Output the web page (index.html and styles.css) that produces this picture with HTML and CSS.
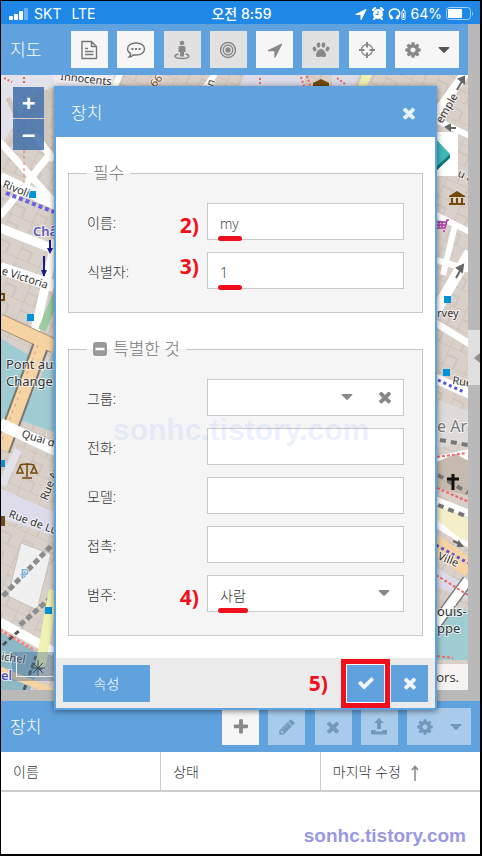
FILE: index.html
```html
<!DOCTYPE html>
<html lang="ko">

<head>
    <meta charset="UTF-8">
    <meta name="viewport" content="width=device-width, initial-scale=1.0">
    <title>장치</title>
    <link rel="stylesheet" href="styles.css">
</head>

<body>
    <!-- 공용 아이콘 -->
    <svg class="symbols" aria-hidden="true">
        <symbol id="i-times" viewBox="0 0 1792 1792">
            <path d="M1490 1322q0 40-28 68l-136 136q-28 28-68 28t-68-28l-294-294-294 294q-28 28-68 28t-68-28l-136-136q-28-28-28-68t28-68l294-294-294-294q-28-28-28-68t28-68l136-136q28-28 68-28t68 28l294 294 294-294q28-28 68-28t68 28l136 136q28 28 28 68t-28 68l-294 294 294 294q28 28 28 68z" />
        </symbol>
        <symbol id="i-check" viewBox="0 0 1792 1792">
            <path d="M1671 566q0 40-28 68l-724 724-136 136q-28 28-68 28t-68-28l-136-136-362-362q-28-28-28-68t28-68l136-136q28-28 68-28t68 28l294 295 656-657q28-28 68-28t68 28l136 136q28 28 28 68z" />
        </symbol>
        <symbol id="i-plus" viewBox="0 0 1792 1792">
            <path d="M1600 736v192q0 40-28 68t-68 28h-416v416q0 40-28 68t-68 28h-192q-40 0-68-28t-28-68v-416h-416q-40 0-68-28t-28-68v-192q0-40 28-68t68-28h416v-416q0-40 28-68t68-28h192q40 0 68 28t28 68v416h416q40 0 68 28t28 68z" />
        </symbol>
        <symbol id="i-cog" viewBox="0 0 1792 1792">
            <path d="M1152 896q0-106-75-181t-181-75-181 75-75 181 75 181 181 75 181-75 75-181zm512-109v222q0 12-8 23t-20 13l-185 28q-19 54-39 91 35 50 107 138 10 12 10 25t-9 23q-27 37-99 108t-94 71q-12 0-26-9l-138-108q-44 23-91 38-16 136-29 186-7 28-36 28h-222q-14 0-24.500-8.500t-11.500-21.500l-28-184q-49-16-90-37l-141 107q-10 9-25 9-14 0-25-11-126-114-165-168-7-10-7-23 0-12 8-23 15-21 51-66.500t54-70.500q-27-50-41-99l-183-27q-13-2-21-12.500t-8-23.500v-222q0-12 8-23t19-13l186-28q14-46 39-92-40-57-107-138-10-12-10-24 0-10 9-23 26-36 98.500-107.500t94.500-71.500q13 0 26 10l138 107q44-23 91-38 16-136 29-186 7-28 36-28h222q14 0 24.500 8.500t11.500 21.500l28 184q49 16 90 37l142-107q9-9 24-9 13 0 25 10 129 119 165 170 7 8 7 22 0 12-8 23-15 21-51 66.500t-54 70.500q26 50 41 98l183 28q13 2 21 12.500t8 23.500z" />
        </symbol>
        <symbol id="i-arrow" viewBox="0 0 1792 1792">
            <path d="M1593 349l-640 1280q-17 35-57 35-5 0-15-2-22-5-35.500-22.500t-13.500-39.500v-576h-576q-22 0-39.500-13.500t-22.500-35.500 4-42 29-30l1280-640q13-7 29-7 27 0 45 19 15 14 18.500 34.500t-6.500 39.500z" />
        </symbol>
        <symbol id="i-pencil" viewBox="0 0 1792 1792">
            <path d="M491 1536l91-91-235-235-91 91v107h128v128h107zm523-928q0-22-22-22-10 0-17 7l-542 542q-7 7-7 17 0 22 22 22 10 0 17-7l542-542q7-7 7-17zm-54-192l416 416-832 832h-416v-416zm683 96q0 53-37 90l-166 166-416-416 166-165q36-38 90-38 53 0 91 38l235 234q37 39 37 91z" />
        </symbol>
        <symbol id="i-caret" viewBox="0 0 12 12">
            <path d="M1 3h10q.6.200.3 1L6.500 8.800q-.5.400-1 0L.7 4Q.4 3.200 1 3z" />
        </symbol>
    </svg>

    <div class="app">
        <header class="status">
            <div class="status-left">
                <svg width="20" height="14" viewBox="0 0 20 14" fill="#fff">
                    <rect x="0" y="9" width="4" height="4" rx="1" />
                    <rect x="5" y="7" width="4" height="6" rx="1" />
                    <rect x="10" y="4" width="4" height="9" rx="1" />
                    <rect x="15" y="1" width="4" height="12" rx="1" opacity=".35" />
                </svg>
                <span>SKT</span>
                <span class="lte">LTE</span>
            </div>
            <div class="status-time">오전 8:59</div>
            <div class="status-right">
                <svg width="14" height="14" fill="#fff"><use href="#i-arrow" /></svg>
                <svg width="12" height="13" viewBox="0 0 12 13">
                    <circle cx="6" cy="7" r="5" fill="#fff" />
                    <path d="M1 3l2-2M11 3L9 1M2 12l1-1M10 12l-1-1" stroke="#fff" stroke-width="2" stroke-linecap="round" />
                    <path d="M6 4v3.500H3.500" fill="none" stroke="#1f87e6" />
                </svg>
                <svg width="19" height="14" viewBox="0 0 19 14" fill="none" stroke="#fff">
                    <path d="M3.500 12C-.5 7 1.500 2 6.500 2s7 5 3 10" stroke-width="1.500" />
                    <path d="M2.500 8.500l2 3.500M10.500 8.500l-2 3.500" stroke-width="2.500" />
                    <rect x="14" y="3.500" width="3" height="9" rx="1" />
                    <path d="M15.500 1.500v2M15.500 6v5" />
                </svg>
                <span>64%</span>
                <svg width="28" height="13" viewBox="0 0 28 13">
                    <rect x=".5" y=".5" width="24" height="12" rx="3" fill="none" stroke="#fff" opacity=".6" />
                    <rect x="2" y="2" width="14" height="9" rx="1" fill="#fff" />
                    <path d="M26 4v5q1.500-2.500 0-5z" fill="#fff" opacity=".7" />
                </svg>
            </div>
        </header>

        <div class="main">
            <section class="map-panel">
                <div class="toolbar">
                    <h2 class="title">지도</h2>
                    <div class="tools">
                        <button class="tool" type="button" aria-label="보고서">
                            <svg width="19" height="20" viewBox="0 0 19 20" fill="none" stroke="#777" stroke-width="1.400">
                                <path d="M2 1.500h9.500l5 5v12H2zM11.500 1.500v5h5M5 8.500h3M5 11.500h8.500M5 14.500h8.500" />
                            </svg>
                        </button>
                        <button class="tool" type="button" aria-label="이벤트">
                            <svg width="20" height="18" viewBox="0 0 20 18" fill="none" stroke="#777" stroke-width="1.400">
                                <path d="M10 2c5 0 8.500 2.500 8.500 6s-3.500 6-8.500 6q-1.200 0-2.500-.3Q5.500 16 3 16q1.700-1.500 1.700-3.400C2.700 11.500 1.500 10 1.500 8c0-3.500 3.500-6 8.500-6z" />
                                <path d="M5.500 8h2M9 8h2M12.500 8h2" stroke-width="2" />
                            </svg>
                        </button>
                        <button class="tool pressed" type="button" aria-label="지오펜스">
                            <svg width="16" height="20" viewBox="0 0 16 20" fill="#888">
                                <circle cx="8" cy="3" r="2.300" />
                                <path d="M6 6h4q1.500 0 1.500 1.500V12H10v4.500H6V12H4.500V7.500Q4.500 6 6 6z" />
                                <path d="M4.500 14C-1 15 0 18.500 8 18.500S17 15 11.500 14" fill="none" stroke="#888" stroke-width="1.400" />
                            </svg>
                        </button>
                        <button class="tool pressed" type="button" aria-label="실시간">
                            <svg width="18" height="18" viewBox="0 0 18 18" fill="none" stroke="#888" stroke-width="1.400">
                                <circle cx="9" cy="9" r="7.500" />
                                <circle cx="9" cy="9" r="4.800" />
                                <circle cx="9" cy="9" r="2" fill="#888" />
                            </svg>
                        </button>
                        <button class="tool" type="button" aria-label="위치">
                            <svg width="18" height="18"><use href="#i-arrow" /></svg>
                        </button>
                        <button class="tool pressed" type="button" aria-label="따라가기">
                            <svg width="18" height="18" viewBox="0 0 18 18">
                                <ellipse cx="6.500" cy="4" rx="1.900" ry="2.700" />
                                <ellipse cx="11.500" cy="4" rx="1.900" ry="2.700" />
                                <ellipse cx="2.500" cy="8" rx="1.800" ry="2.400" transform="rotate(-20 2.500 8)" />
                                <ellipse cx="15.500" cy="8" rx="1.800" ry="2.400" transform="rotate(20 15.500 8)" />
                                <path d="M9 8c2.500 0 5 3.500 5 6 0 2.200-2 2.300-3 1.900q-2-.8-4 0c-1 .4-3 .3-3-1.900 0-2.500 2.500-6 5-6z" />
                            </svg>
                        </button>
                        <button class="tool" type="button" aria-label="중심">
                            <svg width="18" height="18" viewBox="0 0 18 18" fill="none" stroke="#888">
                                <circle cx="9" cy="9" r="5.500" stroke-width="1.400" />
                                <path d="M9 1v5.500M9 11.500V17M1 9h5.500M11.500 9H17" stroke-width="2" />
                            </svg>
                        </button>
                        <button class="tool menu" type="button" aria-label="설정">
                            <svg width="18" height="18"><use href="#i-cog" /></svg>
                            <svg class="dark" width="12" height="12"><use href="#i-caret" /></svg>
                        </button>
                    </div>
                </div>

                <div class="map">
                    <svg class="map-canvas" viewBox="1 75 467 615" preserveAspectRatio="xMinYMin slice">
                        <defs>
                            <pattern id="blocks" width="24" height="19" patternUnits="userSpaceOnUse" patternTransform="rotate(24)">
                                <rect width="24" height="19" fill="#d9d0c9" />
                                <path d="M0 0h24M0 0v19M12 9v10M0 9h12" fill="none" stroke="#c6bab0" />
                            </pattern>
                        </defs>
                        <rect x="1" y="75" width="468" height="615" fill="url(#blocks)" />

                        <!-- 위쪽 -->
                        <path d="M1 75h53v12L36 92 1 145z" fill="#e3e1ea" />
                        <path d="M8 98l14 30-16 20M46 90v60" stroke="#cfc6be" stroke-width="5" fill="none" />
                        <path d="M114 88l6-14M205 88l10-14" stroke="#fff" stroke-width="6" />
                        <path d="M54 75h60l-2 12H54z" fill="#eceaf0" />
                        <path d="M245 75h60v12h-66zM332 75h28l-8 12h-20z" fill="#dcdbe8" />
                        <path d="M362 75h10l-6 12h-8z" fill="#eef0b0" />
                        <path d="M4 78l8 4M24 77v8M260 78v7M301 77l3 9M307 76l3 9M337 78l8 6" stroke="#f06060" stroke-width="2" stroke-dasharray="2 2" />
                        <path d="M313 83l8-4 8 4v3h-16z" fill="#734a08" />
                        <text x="60" y="80" transform="rotate(6 60 80)" class="street">Innocents</text>
                        <text x="155" y="88" transform="rotate(-50 155 88)" class="street brown">66</text>
                        <text x="212" y="90" transform="rotate(-70 212 90)" class="street">in</text>

                        <!-- 왼쪽 -->
                        <g fill="none" stroke="#fff">
                            <path d="M0 142l54 60M34 134l20 26M0 216l50-62" stroke-width="7" />
                            <path d="M0 178l56 26" stroke-width="12" />
                            <path d="M0 228l56 22M56 240L34 335" stroke-width="9" />
                            <path d="M0 268l54 18" stroke-width="12" />
                        </g>
                        <path d="M24 90v95" stroke="#f07070" stroke-dasharray="3 3" />
                        <path d="M6 193l48 19" stroke="#6a62e0" stroke-width="4" stroke-dasharray="4 3" />
                        <path d="M50 240v12M44 256v20" stroke="#1a1a90" stroke-width="2" />
                        <path d="M47 248h6l-3 6zM41 270h6l-3 7z" fill="#1a1a90" />
                        <path d="M0 338l40 24-20 60-20 16z" fill="#9fcbd3" />
                        <path d="M54 350v82l-34-12z" fill="#9fcbd3" />
                        <path d="M56 296l-14 34" stroke="#9ccba0" stroke-width="8" />
                        <path d="M0 321l54 25" stroke="#a58b6d" stroke-width="15" />
                        <path d="M41 345L2 450" stroke="#777" stroke-width="17" />
                        <path d="M41 345L2 450" stroke="#f6d3a2" stroke-width="13" />
                        <path d="M0 321l54 25" stroke="#f6d3a2" stroke-width="13" />
                        <path d="M38 345L2 440" stroke="#c9a27a" stroke-dasharray="3 4" />
                        <path d="M0 424l56 26" stroke="#fff" stroke-width="12" />
                        <path d="M18 450L2 485" stroke="#e3e1ea" stroke-width="8" />
                        <path d="M0 488l54 24v24L0 518z" fill="#dddbe9" />
                        <path d="M21 543l30 11-14 56-29-14z" fill="#f0f0f0" stroke="#c8c0ba" />
                        <path d="M3 596l50-52M20 625l34-30" stroke="#8c8c8c" stroke-width="5" stroke-dasharray="6 3" />
                        <path d="M0 622l54 30" stroke="#fff" stroke-width="9" />
                        <path d="M0 632l44 24-14 34H0z" fill="#8fb8c6" />
                        <path d="M0 630l34 20" stroke="#e88" stroke-width="3" stroke-dasharray="3 2" />
                        <path d="M3 645l18-16M24 690l12-34M40 670l6-14" stroke="#555" stroke-width="3" stroke-dasharray="5 3" />
                        <path d="M54 590L40 668" stroke="#f0f2b2" stroke-width="10" />
                        <path d="M0 670l54 22" stroke="#f6d3a2" stroke-width="7" />
                        <path d="M31 668h14M38 660v16M33 663l10 10M43 663l-10 10" stroke="#333" />
                        <g fill="#0092da">
                            <rect x="29" y="191" width="7" height="7" />
                            <rect x="27" y="314" width="7" height="7" />
                            <rect x="0" y="460" width="5" height="7" />
                            <rect x="45" y="607" width="7" height="7" />
                        </g>
                        <g fill="none" stroke="#734a08" stroke-width="1.500">
                            <path d="M27 463v14M22 478h10M20 465q7-2 14 0M20 466l-3 7h6zM34 466l-3 7h6z" />
                            <path d="M0 294h4v6H0" stroke-width="2" />
                        </g>
                        <path d="M0 516h5v10H0z" fill="#734a08" />
                        <text x="2" y="187" transform="rotate(22 2 187)" class="street">Rivoli</text>
                        <text x="33" y="236" class="station">Châ</text>
                        <text x="1" y="274" transform="rotate(18 1 274)" class="street">e Victoria</text>
                        <text x="6" y="369" class="place">Pont au</text>
                        <text x="6" y="386" class="place">Change</text>
                        <text x="21" y="437" transform="rotate(17 21 437)" class="street">Quai de</text>
                        <text x="47" y="501" transform="rotate(-68 47 501)" class="street">Rue Au</text>
                        <text x="8" y="517" transform="rotate(20 8 517)" class="street">Rue de Lu</text>
                        <text x="20" y="579" class="parking">P</text>
                        <text x="1" y="660" transform="rotate(8 1 660)" class="street">ichel</text>
                        <text x="1" y="680" class="station">el</text>

                        <!-- 오른쪽 -->
                        <g fill="none" stroke="#fff">
                            <path d="M430 122l36-50" stroke-width="9" />
                            <path d="M436 120l34 16" stroke-width="6" />
                            <path d="M434 214l36 18M455 225l-12 50M436 260l34 10" stroke-width="6" />
                            <path d="M434 314l36-62" stroke-width="11" />
                            <path d="M434 322l36 22" stroke-width="7" />
                            <path d="M434 378l36 16M434 462l36-8" stroke-width="10" />
                            <path d="M434 500l36 14M434 522l36 22" stroke-width="8" />
                        </g>
                        <path d="M438 400l32 12v30l-34 6z" fill="#dddbd9" />
                        <path d="M436 462l20-8 14 8v34l-34-8z" fill="#c6b9ad" />
                        <path d="M437 505l33 14v24l-12-6-22-18z" fill="#f3f0c9" />
                        <path d="M434 610h36v50h-36z" fill="#9fcbd3" />
                        <path d="M434 543l36 26" stroke="#f6d3a2" stroke-width="18" />
                        <path d="M434 566l36 22v12l-36-14z" fill="#dddbe9" />
                        <path d="M436 624l32-44" stroke="#777" stroke-width="12" />
                        <path d="M436 624l32-44" stroke="#fff" stroke-width="9" />
                        <path d="M437 457l30-4M437 488l32 14M436 575l32 20M437 656l16 2" stroke="#f06868" stroke-width="2" stroke-dasharray="3 2" />
                        <path d="M440 440l28 5M438 475l30 18M438 505l30 12" stroke="#777" stroke-width="4" stroke-dasharray="6 5" />
                        <path d="M438 380l26 12M436 545l32 18" stroke="#5a52e0" stroke-width="3" stroke-dasharray="3 3" />
                        <g stroke="#666" stroke-width="2" fill="#666">
                            <path d="M457 90l5-9M459 79l5-2v6zM456 128h-7M450 125l-4 2 4 3zM456 278l5-9M457 268l6-3-1 7zM453 541l7 3M458 546l4 0-3-4z" />
                        </g>
                        <path d="M430 132h28v44h-28z" fill="#fff" />
                        <path d="M434 137l16 17-16 18z" fill="#3fb8b8" />
                        <path d="M450 154v4l-16 15v-4z" fill="#157878" />
                        <path d="M449 196l8-5 8 5v1h-16zM451 198h2v5h-2zM456 198h2v5h-2zM461 198h2v5h-2zM449 203h16v2h-16z" fill="#734a08" />
                        <path d="M449 220h-2l-2 8h-9M437 222h9M437 225h8M439 221v6M442 221v6" fill="none" stroke="#ac39ac" stroke-width="1.500" />
                        <circle cx="444" cy="231" r="1" fill="#ac39ac" />
                        <g fill="#0092da">
                            <rect x="444" y="296" width="7" height="7" />
                            <rect x="443" y="369" width="7" height="7" />
                        </g>
                        <path d="M453 474v16M447 479h12" stroke="#111" stroke-width="3" />
                        <text x="442" y="124" transform="rotate(-60 442 124)" class="street">emple</text>
                        <text x="457" y="176" transform="rotate(24 457 176)" class="street">u r</text>
                        <text x="437" y="317" class="street">rvey</text>
                        <text x="452" y="384" transform="rotate(8 452 384)" class="street">Rue</text>
                        <text x="437" y="432" class="district">e Ar</text>
                        <text x="437" y="559" transform="rotate(22 437 559)" class="street">Ville</text>
                        <text x="437" y="616" class="quay">ouis-</text>
                        <text x="437" y="633" class="quay">ppe</text>
                    </svg>
                    <div class="zoom">
                        <button type="button">+</button>
                        <button type="button">−</button>
                    </div>
                    <div class="scale"></div>
                    <div class="credit">contributors.</div>
                </div>
            </section>
            <div class="splitter">
                <div class="collapse"></div>
            </div>
        </div>

        <section class="devices">
            <div class="toolbar">
                <h2 class="title">장치</h2>
                <div class="tools device-tools">
                    <button class="tool" type="button" aria-label="추가">
                        <svg width="18" height="18"><use href="#i-plus" /></svg>
                    </button>
                    <button class="tool" type="button" aria-label="편집" disabled>
                        <svg width="18" height="18"><use href="#i-pencil" /></svg>
                    </button>
                    <button class="tool" type="button" aria-label="삭제" disabled>
                        <svg width="18" height="18"><use href="#i-times" /></svg>
                    </button>
                    <button class="tool" type="button" aria-label="명령" disabled>
                        <svg width="18" height="18" viewBox="0 0 18 18">
                            <path d="M9 0l5 5h-3v6H7V5H4zM1 12h4.500v1.500h7V12H17v4.500H1z" />
                        </svg>
                    </button>
                    <button class="tool menu" type="button" aria-label="메뉴" disabled>
                        <svg width="18" height="18"><use href="#i-cog" /></svg>
                        <svg width="12" height="12"><use href="#i-caret" /></svg>
                    </button>
                </div>
            </div>
            <table class="grid">
                <thead>
                    <tr>
                        <th>이름</th>
                        <th>상태</th>
                        <th>마지막 수정
                            <svg width="8" height="16" viewBox="0 0 8 16" fill="none" stroke="#888" stroke-width="1.500">
                                <path d="M4 16V2M1 5l3-3.500L7 5" />
                            </svg>
                        </th>
                    </tr>
                </thead>
            </table>
            <div class="blog">sonhc.tistory.com</div>
        </section>

        <form class="dialog">
            <div class="dialog-head">
                <h2 class="title">장치</h2>
                <button class="close" type="button" aria-label="닫기">
                    <svg width="18" height="18"><use href="#i-times" /></svg>
                </button>
            </div>
            <div class="dialog-body">
                <fieldset>
                    <legend>필수</legend>
                    <div class="row">
                        <label for="name">이름:</label>
                        <div class="field">
                            <input id="name" type="text" value="my">
                            <span class="step">2)</span>
                            <i class="mark"></i>
                        </div>
                    </div>
                    <div class="row">
                        <label for="uid">식별자:</label>
                        <div class="field">
                            <input id="uid" type="text" value="1">
                            <span class="step high">3)</span>
                            <i class="mark"></i>
                        </div>
                    </div>
                </fieldset>
                <fieldset>
                    <legend>
                        <svg width="14" height="14" viewBox="0 0 14 14">
                            <rect width="14" height="14" rx="3" fill="#999" />
                            <path d="M2.500 7h9" stroke="#fff" stroke-width="2.500" />
                        </svg>특별한 것</legend>
                    <div class="row">
                        <label for="group">그룹:</label>
                        <div class="field combo">
                            <select id="group">
                                <option></option>
                            </select>
                            <svg class="caret" width="12" height="12"><use href="#i-caret" /></svg>
                            <button class="clear" type="button" aria-label="지우기">
                                <svg width="18" height="18"><use href="#i-times" /></svg>
                            </button>
                        </div>
                    </div>
                    <div class="row">
                        <label for="phone">전화:</label>
                        <div class="field"><input id="phone" type="text"></div>
                    </div>
                    <div class="row">
                        <label for="model">모델:</label>
                        <div class="field"><input id="model" type="text"></div>
                    </div>
                    <div class="row">
                        <label for="contact">접촉:</label>
                        <div class="field"><input id="contact" type="text"></div>
                    </div>
                    <div class="row">
                        <label for="category">범주:</label>
                        <div class="field combo">
                            <select id="category">
                                <option>사람</option>
                            </select>
                            <svg class="caret" width="12" height="12"><use href="#i-caret" /></svg>
                            <span class="step">4)</span>
                            <i class="mark wide"></i>
                        </div>
                    </div>
                </fieldset>
            </div>
            <div class="dialog-foot">
                <button class="btn attrs" type="button">속성</button>
                <span class="step-save">5)</span>
                <button class="btn save" type="button" aria-label="저장">
                    <svg width="18" height="18"><use href="#i-check" /></svg>
                </button>
                <button class="btn" type="button" aria-label="취소">
                    <svg width="18" height="18"><use href="#i-times" /></svg>
                </button>
            </div>
            <div class="watermark">sonhc.tistory.com</div>
        </form>
    </div>
</body>

</html>
```
FILE: styles.css
```css
* {
    box-sizing: border-box;
}

body {
    margin: 0;
    padding: 1px 2px 2px 1px;
    background-color: #000;
    color: #333;
    font-family: "Open Sans", "Noto Sans CJK KR", sans-serif;
    font-size: 14px;
    font-weight: 300;
}

button,
input,
select {
    font: inherit;
    color: inherit;
    border: 0;
    border-radius: 0;
    padding: 0;
    margin: 0;
}

svg {
    display: block;
    flex: none;
}

.symbols {
    position: absolute;
    width: 0;
    height: 0;
}

.app {
    position: relative;
    display: flex;
    flex-direction: column;
    min-height: calc(100vh - 3px);
    overflow: hidden;
    background-color: #fff;
}

/* 상태바 */
.status {
    display: grid;
    grid-template-columns: 1fr auto 1fr;
    align-items: center;
    height: 23px;
    padding: 2px 6px 0 8px;
    background-color: #1f87e6;
    color: #fff;
    font-family: Inter, "Noto Sans CJK KR", sans-serif;
    font-weight: 400;
    line-height: 20px;
}

.status-left,
.status-right {
    display: flex;
    align-items: center;
    gap: 5px;
}

.status-right {
    justify-content: flex-end;
    gap: 4px;
}

.lte {
    margin-left: 5px;
}

.status-time {
    font-weight: 500;
}

/* 지도 */
.main {
    display: flex;
    height: 677px;
    background-color: #b9b9b9;
}

.map-panel {
    flex: 1;
    display: flex;
    flex-direction: column;
    margin-bottom: 11px;
}

.toolbar {
    display: flex;
    align-items: center;
    height: 51px;
    padding: 0 9px;
    background-color: #5fa2dd;
}

.title {
    flex: 1;
    margin: 0;
    color: #fff;
    font-size: 17px;
    font-weight: 300;
    line-height: 24px;
}

.tools {
    display: flex;
    justify-content: space-between;
    flex: 0 0 388px;
}

.device-tools {
    flex-basis: 249px;
}

.tool {
    display: flex;
    align-items: center;
    justify-content: center;
    width: 37px;
    height: 37px;
    background-color: #f6f6f6;
    fill: #888;
}

.tool.menu {
    width: 64px;
    gap: 16px;
}

.tool.pressed {
    background-color: #e1e1e1;
}

.tool:disabled {
    background-color: #a9cbeb;
    fill: #7198bd;
}

.dark {
    fill: #555;
}

.map {
    position: relative;
    flex: 1;
    overflow: hidden;
}

.map-canvas {
    position: absolute;
    width: 100%;
    height: 100%;
}

.map-canvas text {
    fill: #333;
    font-family: "Noto Sans", "Open Sans", sans-serif;
    font-weight: 400;
    paint-order: stroke;
    stroke: #fff;
    stroke-width: 2px;
    stroke-opacity: .7;
}

.map-canvas .street {
    font-size: 11px;
}

.map-canvas .place,
.map-canvas .quay {
    font-size: 13px;
}

.map-canvas .district {
    font-size: 16px;
    fill: #777;
}

.map-canvas .station {
    font-size: 13px;
    font-weight: 600;
    fill: #5a58b8;
}

.map-canvas .parking {
    font-size: 15px;
    fill: #6ab0e6;
}

.map-canvas .brown {
    fill: #734a08;
}

.zoom {
    position: absolute;
    top: 12px;
    left: 12px;
    display: grid;
    gap: 1px;
}

.zoom button {
    width: 31px;
    height: 31px;
    background-color: rgba(65, 110, 170, .85);
    color: #fff;
    font-size: 24px;
    font-weight: 700;
    line-height: 28px;
}

.scale {
    position: absolute;
    left: 11px;
    bottom: 9px;
    width: 110px;
    height: 29px;
    padding: 4px;
    background-color: rgba(70, 110, 150, .4);
}

.scale::after {
    content: "";
    display: block;
    height: 20px;
    border: 1px solid #eee;
    border-top: 0;
}

.credit {
    position: absolute;
    right: 0;
    bottom: 0;
    padding: 0 9px;
    background-color: rgba(255, 255, 255, .75);
    font-size: 13px;
    font-weight: 400;
    line-height: 26px;
}

.splitter {
    display: flex;
    flex-direction: column;
    justify-content: center;
    width: 12px;
    padding-bottom: 10px;
}

.collapse {
    display: flex;
    align-items: center;
    justify-content: flex-end;
    height: 55px;
    background-color: #e0e0e0;
}

.collapse::after {
    content: "";
    border: 5px solid transparent;
    border-right: 6px solid #909090;
    border-left: 0;
}

/* 장치 목록 */
.devices {
    position: relative;
    flex: 1;
}

.grid {
    width: 100%;
    table-layout: fixed;
    border-collapse: collapse;
}

.grid th {
    height: 39px;
    padding: 0 12px;
    border-bottom: 2px solid #ccc;
    border-left: 1px solid #ccc;
    font-weight: 300;
    text-align: left;
}

.grid th:first-child {
    border-left: 0;
}

.grid svg {
    display: inline-block;
    margin-left: 6px;
    vertical-align: middle;
}

.blog {
    position: absolute;
    right: 14px;
    bottom: 6px;
    color: #9a98e2;
    font: bold 19px/24px "Liberation Sans", sans-serif;
}

/* 장치 대화상자 */
.dialog {
    position: absolute;
    top: 85px;
    left: 53px;
    right: 43px;
    border: 2px solid #5fa2dd;
    background-color: #fff;
    box-shadow: 0 1px 6px rgba(0, 0, 0, .5);
}

.dialog-head {
    display: flex;
    align-items: center;
    height: 49px;
    padding: 0 17px 0 15px;
    background-color: #5fa2dd;
}

.close,
.clear {
    background: none;
    fill: #e8f2fb;
}

.dialog-body {
    padding: 24px 12px 22px;
}

fieldset {
    min-width: 0;
    margin: 0 0 24px;
    padding: 18px 18px 23px;
    border: 1px solid #c8c8c8;
    background-color: #f5f5f5;
}

fieldset:last-child {
    margin-bottom: 0;
}

legend {
    display: flex;
    align-items: center;
    gap: 6px;
    padding: 0 6px;
    color: #777;
    font-size: 17px;
    line-height: 24px;
}

.row {
    display: flex;
    align-items: center;
    margin-bottom: 12px;
}

.row:last-child {
    margin-bottom: 0;
}

.row label {
    width: 120px;
}

.field {
    position: relative;
    flex: 1;
}

.field input,
.field select {
    display: block;
    width: 100%;
    height: 37px;
    padding: 4px 12px 0;
    border: 1px solid #c8c8c8;
    background-color: #fff;
    appearance: none;
}

.caret {
    position: absolute;
    top: 12px;
    right: 14px;
    fill: #888;
}

.clear {
    position: absolute;
    top: 9px;
    right: 10px;
    fill: #888;
}

#group + .caret {
    right: 51px;
}

/* 순서 표시 */
.step,
.step-save {
    color: #f00f1c;
    font-family: "Noto Sans", sans-serif;
    font-size: 21px;
    font-weight: 700;
    line-height: 24px;
}

.step {
    position: absolute;
    top: 10px;
    right: 100%;
    margin-right: 8px;
}

.step.high {
    top: 2px;
}

.mark {
    position: absolute;
    left: 11px;
    bottom: -1px;
    width: 24px;
    height: 5px;
    border-radius: 3px;
    background-color: #f00f1c;
}

.mark.wide {
    width: 30px;
}

.dialog-foot {
    display: flex;
    align-items: center;
    gap: 7px;
    height: 50px;
    padding: 0 7px;
    background-color: #ebebeb;
}

.btn {
    display: flex;
    align-items: center;
    justify-content: center;
    width: 37px;
    height: 37px;
    background-color: #5fa2dd;
    color: #fff;
    fill: #f0f6fc;
}

.attrs {
    width: 87px;
    margin-right: auto;
}

.step-save {
    margin-right: 12px;
}

.save {
    box-shadow: 0 0 0 1px #fff, 0 0 0 6px #f00f1c;
}

.watermark {
    position: absolute;
    top: 324px;
    left: 57px;
    color: rgba(110, 150, 255, .15);
    font: bold 30px/36px "Liberation Sans", sans-serif;
    pointer-events: none;
}
```
